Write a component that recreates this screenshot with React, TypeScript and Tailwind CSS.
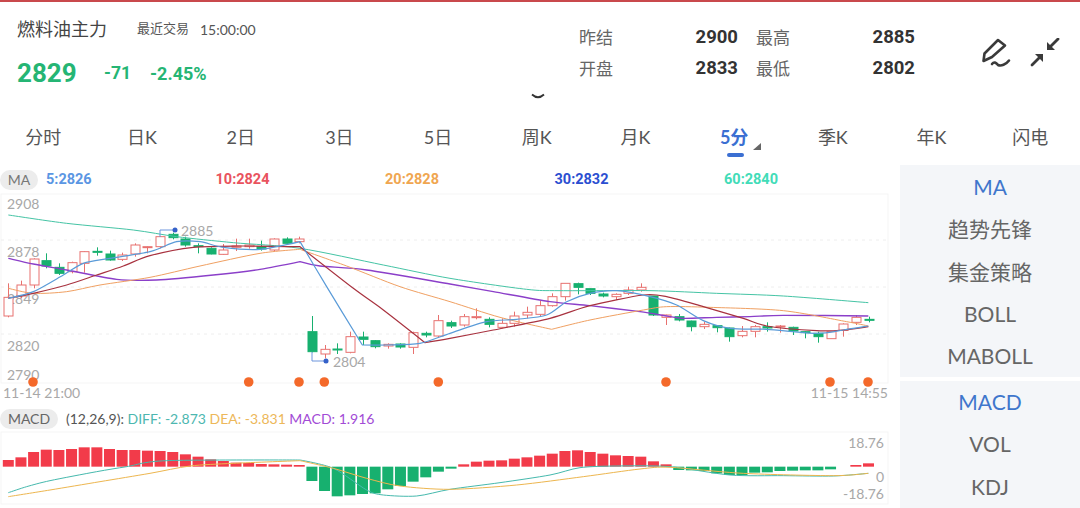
import React from "react";

const UP = "#e8716f";
const DOWN = "#17b06f";
const STEP = 12.65;

// candles: [high, top, bottom, low, up?] in 3x chart coordinates
const candles: [number, number, number, number, number][] = [
  [280, 322, 378, 382, 1], [272, 285, 318, 325, 1], [205, 207, 285, 295, 1], [190, 212, 228, 235, 0],
  [220, 232, 250, 255, 0], [215, 218, 245, 250, 1], [183, 185, 220, 248, 1], [172, 184, 187, 197, 0],
  [182, 192, 210, 212, 0], [188, 195, 208, 213, 1], [160, 165, 192, 200, 1], [168, 170, 172, 190, 1],
  [138, 140, 170, 175, 1], [128, 133, 143, 148, 0], [140, 147, 165, 170, 0], [160, 167, 170, 190, 0],
  [172, 175, 192, 193, 0], [162, 180, 193, 195, 1], [146, 168, 172, 183, 1], [146, 165, 170, 176, 1],
  [152, 170, 177, 182, 0], [145, 147, 180, 183, 1], [142, 147, 160, 165, 0], [140, 147, 155, 160, 1],
  [378, 425, 485, 487, 0], [465, 478, 492, 505, 1], [460, 477, 480, 492, 0], [425, 440, 487, 490, 1],
  [425, 441, 448, 465, 0], [450, 452, 470, 475, 0], [460, 463, 468, 476, 1], [460, 462, 471, 476, 0],
  [425, 428, 472, 492, 1], [425, 430, 435, 442, 0], [375, 392, 438, 442, 1], [392, 398, 408, 414, 0],
  [372, 380, 405, 410, 1], [355, 380, 382, 388, 1], [382, 388, 403, 412, 0], [385, 400, 412, 415, 1],
  [365, 378, 400, 410, 1], [350, 367, 375, 385, 1], [332, 347, 373, 378, 1], [310, 320, 347, 350, 1],
  [280, 280, 320, 332, 1], [278, 281, 292, 313, 0], [295, 296, 310, 315, 0], [308, 312, 318, 322, 0],
  [310, 313, 320, 330, 1], [290, 300, 310, 315, 1], [280, 292, 300, 305, 1], [318, 318, 375, 378, 0],
  [374, 375, 382, 405, 1], [372, 380, 390, 394, 0], [392, 393, 410, 424, 0], [395, 403, 410, 417, 1],
  [406, 407, 413, 427, 0], [413, 414, 440, 455, 0], [408, 424, 437, 442, 1], [405, 410, 424, 442, 1],
  [397, 410, 414, 425, 0], [405, 408, 410, 428, 1], [410, 412, 423, 435, 0], [423, 425, 428, 445, 0],
  [425, 430, 440, 458, 0], [425, 425, 446, 447, 1], [400, 402, 421, 440, 1], [375, 382, 397, 405, 1],
  [380, 388, 390, 397, 0],
];

// a third value marks a sharp corner on the line
const ma60 = [[25, 75], [200, 100], [400, 120], [530, 140], [700, 158], [900, 175], [1150, 225], [1350, 265], [1580, 298], [1680, 302], [1950, 302], [2150, 310], [2350, 318], [2605, 338]];
const ma30 = [[25, 205], [100, 222], [200, 240], [350, 268], [470, 270], [640, 255], [780, 238], [900, 215, 1], [960, 228], [1100, 240], [1350, 282], [1480, 305], [1650, 335], [1770, 347], [1920, 365], [2000, 378], [2050, 385], [2150, 382], [2250, 380], [2350, 376], [2605, 378]];
const ma20 = [[25, 295], [100, 310], [200, 305], [300, 285], [450, 262], [600, 228], [780, 190], [900, 178, 1], [1040, 228], [1200, 290], [1350, 335], [1500, 382], [1655, 418, 1], [1770, 390], [1930, 360], [2000, 350], [2130, 352], [2350, 362], [2540, 395], [2605, 408]];
const ma10 = [[25, 325], [100, 310], [200, 285], [290, 255], [370, 228], [450, 197], [580, 172], [720, 168], [900, 170, 1], [1060, 295], [1150, 360], [1275, 458, 1], [1350, 445], [1480, 420], [1650, 385], [1770, 347], [1930, 315], [2000, 320], [2110, 350], [2230, 385], [2300, 408], [2450, 422], [2530, 420], [2605, 410]];
const ma5 = [[25, 325], [100, 305], [190, 255], [250, 220], [330, 205], [450, 185], [530, 155], [600, 155], [670, 172], [780, 178], [900, 155, 1], [980, 290], [1087, 465, 1], [1160, 465], [1260, 460], [1350, 430], [1460, 395], [1550, 388], [1640, 375], [1700, 335], [1770, 310], [1850, 302], [1950, 320], [2030, 345], [2110, 392], [2190, 415], [2300, 418], [2450, 430], [2530, 420], [2605, 408]];

// macd: bar end in 3x coordinates, the zero line is at 290
const bars = [270, 262, 246, 239, 240, 237, 232, 232, 237, 240, 240, 242, 243, 246, 253, 260, 268, 273, 278, 279, 282, 283, 284, 285, 333, 363, 379, 376, 372, 370, 358, 348, 335, 322, 305, 296, 283, 275, 272, 271, 266, 262, 257, 251, 243, 241, 246, 251, 256, 258, 260, 274, 283, 300, 301, 303, 310, 315, 315, 308, 307, 303, 302, 301, 301, 298, 290, 285, 280];
const diff = [[25, 368], [80, 350], [150, 332], [290, 305], [380, 290], [500, 272], [900, 270, 1], [1000, 295], [1100, 360], [1150, 375], [1250, 378], [1350, 358], [1500, 338], [1650, 315], [1740, 293], [1850, 288], [2010, 290], [2190, 315], [2350, 317], [2500, 318], [2605, 310]];
const dea = [[25, 380], [150, 360], [300, 335], [450, 310], [570, 288], [700, 280], [900, 272, 1], [1000, 295], [1100, 325], [1200, 348], [1350, 358], [1550, 345], [1750, 320], [1920, 297], [2010, 292], [2230, 310], [2500, 317], [2605, 310]];

// smoothed line through the points
const smooth = (a: number[][], dy = 0) => {
  const p = a.map(([x, y, c]) => [x / 3, y / 3 - dy, c ?? 0]);
  const k = 0.14;
  let d = `M${p[0][0]} ${p[0][1]}`;
  for (let i = 0; i < p.length - 1; i++) {
    const p0 = p[Math.max(i - 1, 0)];
    const p1 = p[i];
    const p2 = p[i + 1];
    const p3 = p[Math.min(i + 2, p.length - 1)];
    const k1 = p1[2] ? 0 : k;
    const k2 = p2[2] ? 0 : k;
    d += ` C${p1[0] + (p2[0] - p0[0]) * k1} ${p1[1] + (p2[1] - p0[1]) * k1} ${p2[0] - (p3[0] - p1[0]) * k2} ${p2[1] - (p3[1] - p1[1]) * k2} ${p2[0]} ${p2[1]}`;
  }
  return d;
};

const dots = [33, 248.7, 299, 324.3, 438.3, 666, 830, 868];
const tabs = ["分时", "日K", "2日", "3日", "5日", "周K", "月K", "5分", "季K", "年K", "闪电"];
const legend = [
  ["5:2826", "text-[#5b96e3]"],
  ["10:2824", "text-[#e9535e]"],
  ["20:2828", "text-[#f0a650]"],
  ["30:2832", "text-[#2b4fd1]"],
  ["60:2840", "text-[#42dcb8]"],
];

function Candles() {
  return (
    <svg width="890" height="214" className="block">
      <rect x="1" y="4" width="887" height="189" fill="none" stroke="#f5f5f5" />
      {[50, 97, 144].map((y) => (
        <line key={y} x1="1" x2="888" y1={y} y2={y} stroke="#eeeeee" strokeDasharray="3 4" />
      ))}
      <g fontSize="14" fill="#a8a8a8" fontFamily="Lato, sans-serif">
        <text x="7" y="19">2908</text>
        <text x="7" y="67">2878</text>
        <text x="7" y="114">2849</text>
        <text x="7" y="161">2820</text>
        <text x="7" y="190">2790</text>
        <text x="3" y="208">11-14 21:00</text>
        <text x="888" y="208" textAnchor="end">11-15 14:55</text>
        <text x="181" y="46">2885</text>
        <text x="333" y="177">2804</text>
      </g>
      {candles.map(([h, t, b, l, up], i) => {
        const x = Math.round(8.3 + STEP * i) + 0.5;
        const c = up ? UP : DOWN;
        return (
          <g key={i}>
            <line x1={x} x2={x} y1={h / 3} y2={t / 3} stroke={c} />
            <line x1={x} x2={x} y1={b / 3} y2={l / 3} stroke={c} />
            <rect
              x={x - 4.5}
              y={t / 3}
              width="9"
              height={Math.max((b - t) / 3, 1)}
              fill={up ? "#ffffff" : c}
              stroke={c}
            />
          </g>
        );
      })}
      <g fill="none" strokeLinejoin="round">
        <path d={smooth(ma60)} stroke="#45c4a5" />
        <path d={smooth(ma30)} stroke="#8b3fc9" strokeWidth="1.4" />
        <path d={smooth(ma20)} stroke="#f0a062" />
        <path d={smooth(ma10)} stroke="#a8323f" strokeWidth="1.2" />
        <path d={smooth(ma5)} stroke="#5a9bd8" strokeWidth="1.2" />
        <polyline points="160,47 160,40 175,40" stroke="#6d95dc" />
        <polyline points="312,162 312,171 326,171" stroke="#6d95dc" />
      </g>
      <circle cx="175" cy="40" r="2.5" fill="#3461c9" />
      <circle cx="326" cy="171" r="2.5" fill="#3461c9" />
      {dots.map((x) => (
        <circle key={x} cx={x} cy="192" r="4.8" fill="#f4692a" />
      ))}
    </svg>
  );
}

function Macd() {
  return (
    <svg width="890" height="78" className="block">
      <rect x="1" y="2" width="887" height="72" fill="none" stroke="#f5f5f5" />
      {bars.map((v, i) => {
        const x = 8.3 + STEP * i - 5.5;
        const zero = 290;
        if (v === zero) return null;
        const up = v < zero;
        return (
          <rect
            key={i}
            x={x}
            y={(up ? v : zero) / 3 - 60}
            width="11"
            height={Math.abs(v - zero) / 3}
            fill={up ? "#f23b4a" : "#17b06f"}
          />
        );
      })}
      <g fill="none" strokeLinejoin="round">
        <path d={smooth(diff, 60)} stroke="#45b9ad" />
        <path d={smooth(dea, 60)} stroke="#edb64f" />
      </g>
      <g fontSize="14" fill="#a8a8a8" fontFamily="Lato, sans-serif" textAnchor="end">
        <text x="884" y="18">18.76</text>
        <text x="884" y="52">0</text>
        <text x="884" y="69">-18.76</text>
      </g>
    </svg>
  );
}

function SideGroup({ items, className }: { items: string[]; className: string }) {
  return (
    <div className={`bg-[#f4f6f9] flex flex-col items-center text-[21px] text-[#666666] ${className}`}>
      {items.map((t, i) => (
        <div key={t} className={`h-[42.3px] leading-[42.3px] ${i === 0 ? "text-[#3f76cc]" : ""}`}>
          {t}
        </div>
      ))}
    </div>
  );
}

export default function App() {
  return (
    <div className="relative w-[1080px] h-[508px] overflow-hidden bg-white font-['Lato','Noto_Sans_CJK_SC',sans-serif]">
      <div className="h-[2px] bg-[#c9494c]" />

      <div className="h-[113px] flex">
        <div className="w-[579px] pl-[17px] pt-[15px]">
          <div className="flex items-center h-[24px] text-[#444444]">
            <span className="text-[18px] w-[120px]">燃料油主力</span>
            <span className="text-[13px] text-[#555555] w-[63px]">最近交易</span>
            <span className="text-[14px] text-[#555555]">15:00:00</span>
          </div>
          <div className="flex items-center h-[30px] mt-[17px] font-bold text-[#25b574] font-['Roboto','Noto_Sans_CJK_SC',sans-serif]">
            <span className="text-[26px] w-[87px]">2829</span>
            <span className="text-[17.5px] w-[46px]">-71</span>
            <span className="text-[18px]">-2.45%</span>
          </div>
        </div>

        <div className="w-[336px] pt-[20px] grid grid-cols-[159px_159px] gap-x-[18px] auto-rows-[31px] items-center text-[17px] text-[#666666]">
          {[["昨结", "2900"], ["最高", "2885"], ["开盘", "2833"], ["最低", "2802"]].map(([k, v]) => (
            <div key={k} className="flex justify-between items-center">
              <span>{k}</span>
              <span className="font-bold text-[18.5px] text-[#333333] font-['Roboto',sans-serif]">{v}</span>
            </div>
          ))}
        </div>

        <div className="flex pl-[66px] pt-[36px] gap-[19px] items-start">
          <svg width="30" height="32" viewBox="0 0 30 32" fill="none" stroke="#3a3a3a" strokeWidth="2.6" strokeLinejoin="round" strokeLinecap="round">
            <path d="M2.5 23 L3.5 15.5 L17 2 L24 7.5 L11 19 Z" />
            <path d="M11 26 C13 23.5 15 24.5 17 27 C20 28.5 25 26.5 28 22.5" />
          </svg>
          <svg width="30" height="30" viewBox="0 0 30 30" fill="none" stroke="#3a3a3a" strokeWidth="2.8" strokeLinecap="round">
            <path d="M28 1 L20 9" />
            <path d="M2 27 L10 19" />
            <path d="M17 12 L17 4 L25 12 Z" fill="#3a3a3a" stroke="none" />
            <path d="M13 16 L13 24 L5 16 Z" fill="#3a3a3a" stroke="none" />
          </svg>
        </div>
      </div>

      <svg className="absolute left-[531px] top-[93px]" width="14" height="7" viewBox="0 0 14 7" fill="none" stroke="#333333" strokeWidth="1.8">
        <path d="M1 1.5 Q7 7 13 1.5" />
      </svg>

      <div className="h-[50px] -ml-[6px] grid grid-cols-[repeat(11,98.7px)]">
        {tabs.map((t) => (
          <div key={t} className={`relative flex justify-center pt-[9px] text-[18px] leading-[26px] ${t === "5分" ? "text-[#3b6fd2] font-bold" : "text-[#555555]"}`}>
            {t}
            {t === "5分" && (
              <>
                <span className="absolute left-[42px] top-[38px] w-[17px] h-[4px] rounded-full bg-[#3b6fd2]" />
                <span className="absolute left-[68px] top-[28px] w-0 h-0 border-l-[8px] border-l-transparent border-b-[7px] border-b-[#666666]" />
              </>
            )}
          </div>
        ))}
      </div>

      <div className="flex">
        <div className="w-[900px]">
          <div className="h-[25px] pt-[5px] flex items-center">
            <span className="w-[38px] h-[20px] rounded-full bg-[#ececec] text-[#777777] text-[14px] leading-[20px] text-center">MA</span>
            <div className="ml-[8px] grid grid-cols-[repeat(5,169.5px)] text-[14.5px] font-bold font-['Roboto',sans-serif]">
              {legend.map(([t, c]) => (
                <span key={t} className={c}>{t}</span>
              ))}
            </div>
          </div>
          <Candles />
          <div className="h-[26px] pt-[3px] flex items-center text-[14px] whitespace-pre">
            <span className="w-[58px] h-[20px] rounded-full bg-[#ececec] text-[#666666] text-[14px] leading-[20px] text-center">MACD</span>
            <span className="ml-[8px] text-[#555555]">(12,26,9): </span>
            <span className="text-[#4db7b0]">DIFF: -2.873 </span>
            <span className="text-[#edb85a]">DEA: -3.831 </span>
            <span className="text-[#a24bd6]">MACD: 1.916</span>
          </div>
          <Macd />
        </div>

        <div className="w-[180px] flex flex-col gap-[4px]">
          <SideGroup items={["MA", "趋势先锋", "集金策略", "BOLL", "MABOLL"]} className="h-[212px] pt-[1px]" />
          <SideGroup items={["MACD", "VOL", "KDJ"]} className="h-[127px]" />
        </div>
      </div>
    </div>
  );
}
